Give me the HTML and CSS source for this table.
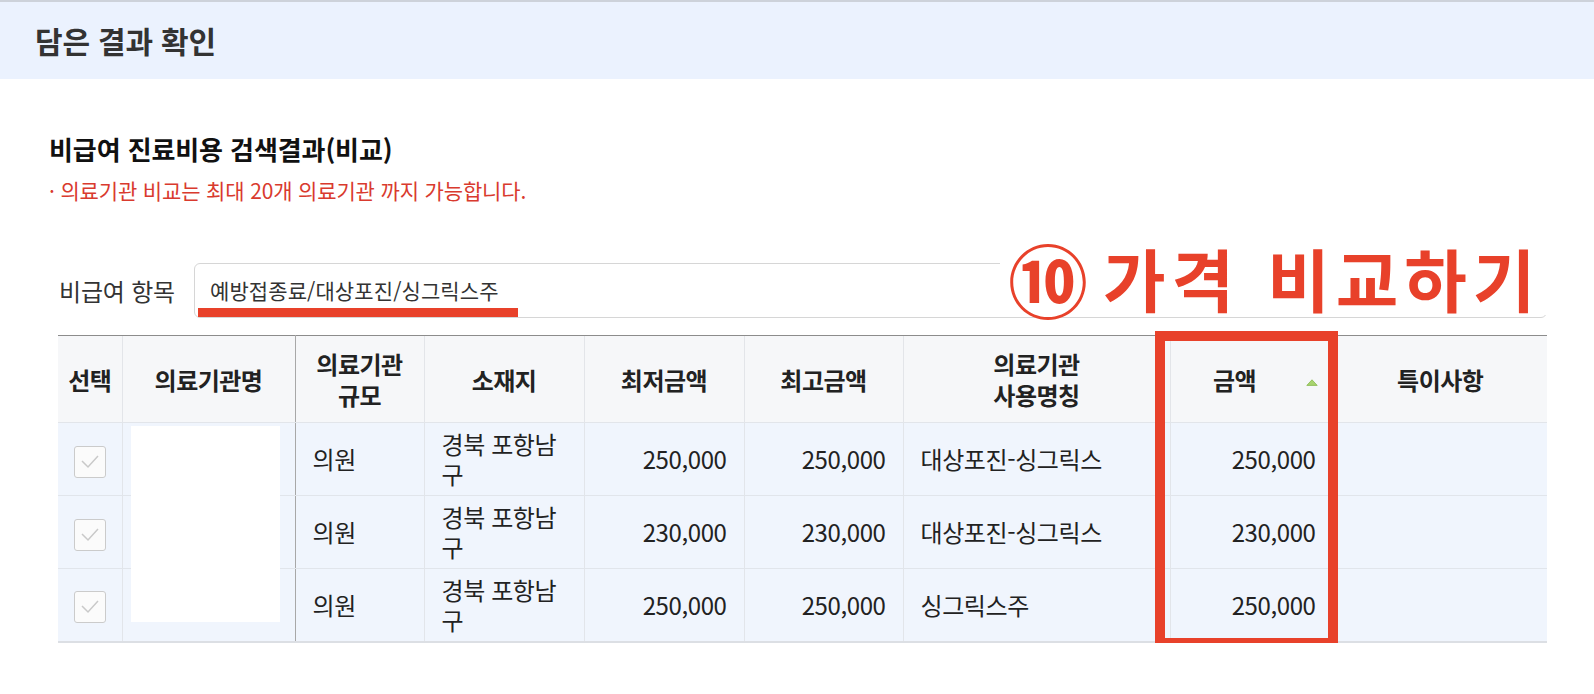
FILE: index.html
```html
<!DOCTYPE html>
<html lang="ko">
<head>
<meta charset="utf-8">
<title>담은 결과 확인</title>
<link rel="stylesheet" href="styles.css">
</head>
<body>
<header class="page-head">
  <h1 class="page-title">담은 결과 확인</h1>
</header>
<main class="content">
  <h2 class="section-title">비급여 진료비용 검색결과(비교)</h2>
  <p class="note">· 의료기관 비교는 최대 20개 의료기관 까지 가능합니다.</p>

  <div class="search">
    <span class="search-label">비급여 항목</span>
    <div class="search-field">예방접종료/대상포진/싱그릭스주</div>
  </div>

  <div class="table-wrap">
    <table class="result">
      <colgroup>
        <col class="c-sel">
        <col class="c-name">
        <col class="c-size">
        <col class="c-loc">
        <col class="c-min">
        <col class="c-max">
        <col class="c-use">
        <col class="c-amt">
        <col class="c-etc">
      </colgroup>
      <thead>
        <tr>
          <th>선택</th>
          <th class="sep">의료기관명</th>
          <th>의료기관<br>규모</th>
          <th>소재지</th>
          <th>최저금액</th>
          <th>최고금액</th>
          <th>의료기관<br>사용명칭</th>
          <th class="sortable">금액<span class="sort-icon"><svg width="12" height="7" viewBox="0 0 12 7"><polygon points="6,0.8 11.2,6.4 0.8,6.4" fill="#a8d46f" stroke="#86b84c" stroke-width="0.8"/></svg></span></th>
          <th>특이사항</th>
        </tr>
      </thead>
      <tbody>
        <tr>
          <td class="sel"><span class="check"><svg width="30" height="30" viewBox="0 0 30 30"><polyline points="7,14 13,20 23,9" fill="none" stroke="#c9c9c9" stroke-width="1.5"/></svg></span></td>
          <td class="sep"></td>
          <td>의원</td>
          <td>경북 포항남<br>구</td>
          <td class="num">250,000</td>
          <td class="num">250,000</td>
          <td>대상포진-싱그릭스</td>
          <td class="num">250,000</td>
          <td></td>
        </tr>
        <tr>
          <td class="sel"><span class="check"><svg width="30" height="30" viewBox="0 0 30 30"><polyline points="7,14 13,20 23,9" fill="none" stroke="#c9c9c9" stroke-width="1.5"/></svg></span></td>
          <td class="sep"></td>
          <td>의원</td>
          <td>경북 포항남<br>구</td>
          <td class="num">230,000</td>
          <td class="num">230,000</td>
          <td>대상포진-싱그릭스</td>
          <td class="num">230,000</td>
          <td></td>
        </tr>
        <tr>
          <td class="sel"><span class="check"><svg width="30" height="30" viewBox="0 0 30 30"><polyline points="7,14 13,20 23,9" fill="none" stroke="#c9c9c9" stroke-width="1.5"/></svg></span></td>
          <td class="sep"></td>
          <td>의원</td>
          <td>경북 포항남<br>구</td>
          <td class="num">250,000</td>
          <td class="num">250,000</td>
          <td>싱그릭스주</td>
          <td class="num">250,000</td>
          <td></td>
        </tr>
      </tbody>
    </table>
  </div>

  <span class="mark-underline"></span>
  <div class="callout"><span class="callout-num">⑩</span><span class="callout-text">가격 비교하기</span></div>
  <span class="mark-box"></span>
  <span class="redact"></span>
</main>
</body>
</html>
```

FILE: styles.css
```css
* { box-sizing: border-box; }

body {
  margin: 0;
  background: #ffffff;
  color: #222222;
  font-family: "Noto Sans CJK KR", "Noto Sans", sans-serif;
}

.page-head {
  height: 79px;
  border-top: 2px solid #cdd2da;
  background: #ebf2fe;
  padding-left: 35px;
}

.page-title {
  margin: 0;
  font-size: 30px;
  font-weight: 700;
  line-height: 77px;
  color: #333333;
  letter-spacing: -0.2px;
}

.content {
  position: relative;
  padding: 53px 47px 0 49px;
}

.section-title {
  margin: 0;
  font-size: 26px;
  line-height: 34px;
  font-weight: 700;
  color: #111111;
  letter-spacing: -0.1px;
}

.note {
  margin: 10px 0 0;
  font-size: 21px;
  line-height: 28px;
  color: #d93a2e;
  letter-spacing: -0.15px;
}

.search {
  display: flex;
  align-items: center;
  height: 55px;
  margin: 59px 0 0 9px;
}

.search-label {
  flex: 0 0 136px;
  padding-left: 1px;
  font-size: 24px;
  color: #333333;
  letter-spacing: -0.2px;
}

.search-field {
  flex: 1;
  height: 55px;
  border: 1px solid #d6d6d6;
  border-radius: 6px;
  padding-left: 15px;
  font-size: 21px;
  line-height: 53px;
  color: #333333;
  letter-spacing: 0.1px;
}

.table-wrap {
  margin: 17px 0 0 9px;
}

.result {
  width: 1489px;
  table-layout: fixed;
  border-collapse: collapse;
}

.c-sel { width: 64px; }
.c-name { width: 173px; }
.c-size { width: 129px; }
.c-loc { width: 160px; }
.c-min { width: 160px; }
.c-max { width: 159px; }
.c-use { width: 267px; }
.c-amt { width: 163px; }
.c-etc { width: 214px; }

.result th {
  height: 87px;
  padding: 0 2px;
  background: #f6f7f9;
  border-top: 1px solid #8c8c8c;
  border-bottom: 1px solid #e2e5ea;
  border-left: 1px solid #e3e5e9;
  font-size: 24px;
  font-weight: 700;
  line-height: 31px;
  letter-spacing: -0.5px;
  color: #222222;
  text-align: center;
  vertical-align: middle;
}

.result th:first-child,
.result td:first-child { border-left: none; }

.result th.sortable {
  padding-left: 30px;
  text-align: center;
}

.sort-icon {
  display: inline-block;
  margin-left: 50px;
  vertical-align: 4px;
  line-height: 0;
}

.result td {
  height: 73px;
  padding: 0 17px;
  background: #f0f5fd;
  border-bottom: 1px solid #e1e5eb;
  border-left: 1px solid #e2e5ea;
  font-size: 24px;
  line-height: 30px;
  letter-spacing: -0.4px;
  color: #222222;
  vertical-align: middle;
}

.result tbody tr:last-child td { border-bottom: 2px solid #dcdfe4; }

.result .sep { border-right: 1px solid #a8a8a8; }

.result td.num { text-align: right; }

.result td.sel {
  padding: 0;
  text-align: center;
}

.check {
  display: inline-block;
  width: 32px;
  height: 32px;
  margin-top: 5px;
  border: 1px solid #cbcbcb;
  border-radius: 3px;
  background: #fbfbfb;
  line-height: 0;
  vertical-align: middle;
}

.mark-underline {
  position: absolute;
  left: 198px;
  top: 229px;
  width: 320px;
  height: 9px;
  background: #e8412a;
}

.callout {
  position: absolute;
  left: 1000px;
  top: 161px;
  width: 552px;
  height: 75px;
  display: flex;
  align-items: center;
  background: #ffffff;
  color: #e8412a;
  font-weight: 700;
  white-space: nowrap;
}

.callout-num {
  margin-left: 8px;
  font-size: 80px;
  line-height: 75px;
}

.callout-text {
  margin-left: 15px;
  font-size: 68px;
  line-height: 75px;
  letter-spacing: 6px;
  word-spacing: 2px;
}

.mark-box {
  position: absolute;
  left: 1155px;
  top: 252px;
  width: 183px;
  height: 317px;
  border: 10px solid #e8412a;
}

.redact {
  position: absolute;
  left: 131px;
  top: 347px;
  width: 149px;
  height: 196px;
  background: #ffffff;
}
```
